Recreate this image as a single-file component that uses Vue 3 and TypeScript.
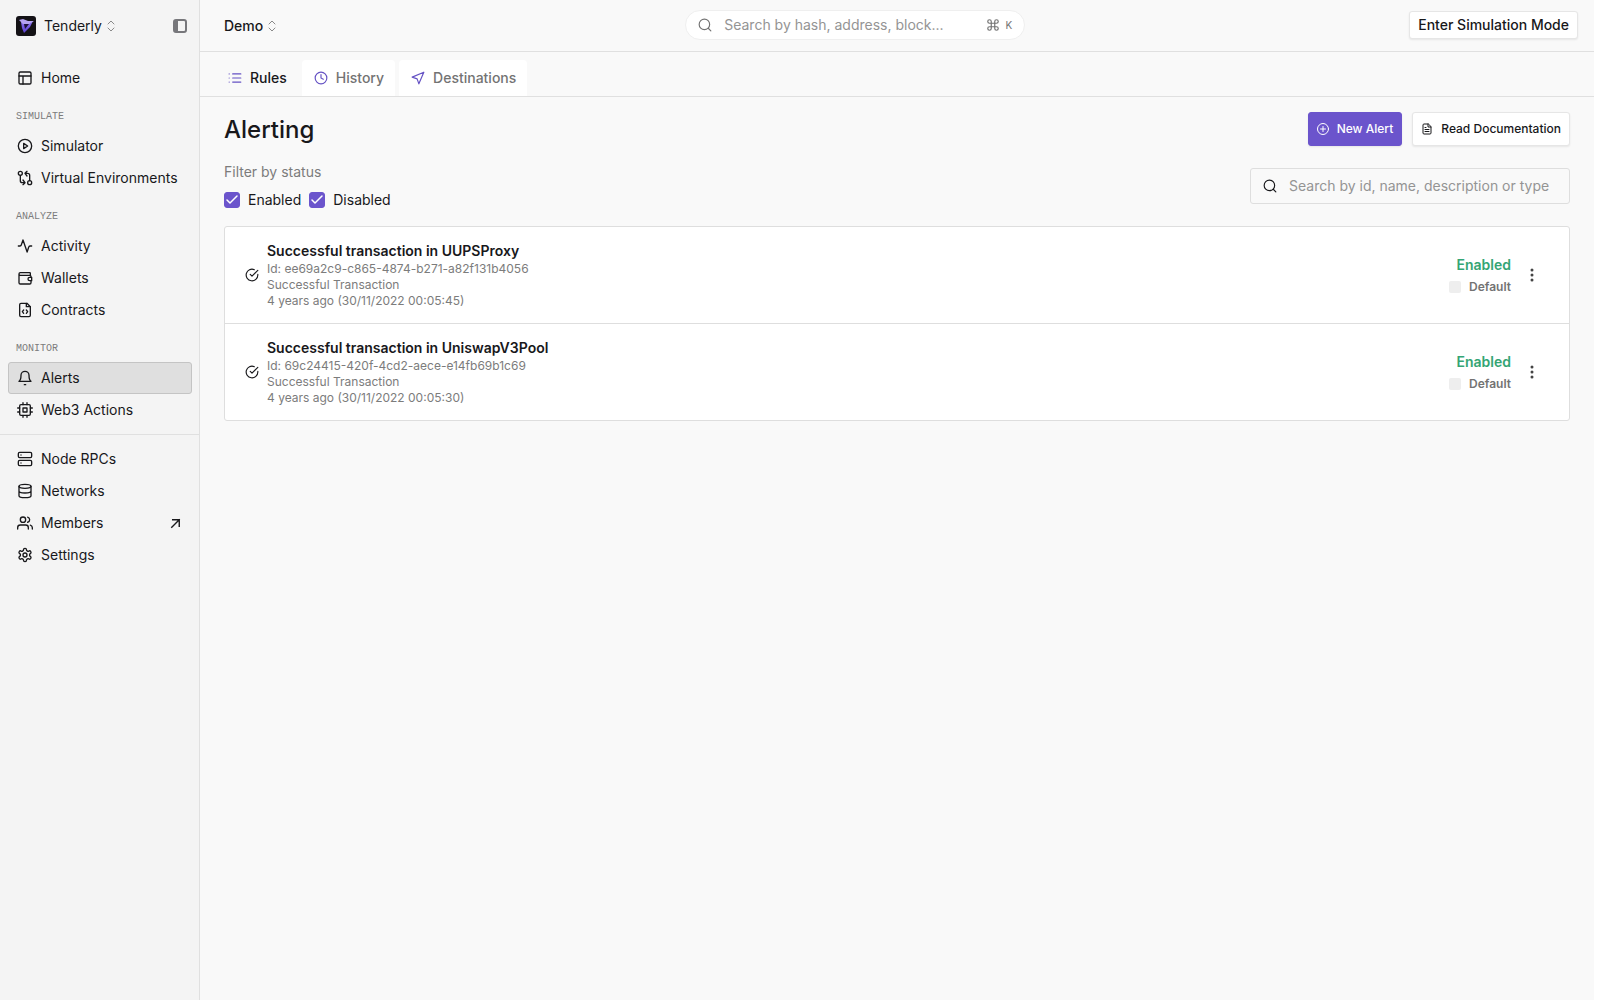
<script setup lang="ts">
import { ref } from 'vue'

interface NavItem {
  label: string
  icon: string
  active?: boolean
  external?: boolean
}
interface NavGroup {
  title?: string
  divided?: boolean
  items: NavItem[]
}
interface Alert {
  title: string
  id: string
  kind: string
  time: string
}

const icons: Record<string, string> = {
  home: '<rect x="3" y="3" width="18" height="18" rx="2"/><path d="M3 9h18M9 21V9"/>',
  play: '<circle cx="12" cy="12" r="10"/><path d="M10 8l6 4-6 4z"/>',
  compare:
    '<circle cx="5" cy="5" r="3"/><circle cx="19" cy="19" r="3"/><path d="M5 8v8a3 3 0 0 0 3 3h3M9 15l3 4-3 3M19 16V8a3 3 0 0 0-3-3h-3M15 9l-3-4 3-3"/>',
  activity: '<path d="M22 12h-2.500a2 2 0 0 0-1.900 1.500L15.200 21 9 3 6.400 10.500A2 2 0 0 1 4.500 12H2"/>',
  wallet:
    '<path d="M20 8V5a1 1 0 0 0-1-1H5a2 2 0 0 0-2 2v13a2 2 0 0 0 2 2h14a2 2 0 0 0 2-2v-3M3 6a2 2 0 0 0 2 2h14a2 2 0 0 1 2 2v1"/><path d="M22 11h-3a2.500 2.500 0 0 0 0 5h3z"/>',
  contract:
    '<path d="M15 2H6a2 2 0 0 0-2 2v16a2 2 0 0 0 2 2h12a2 2 0 0 0 2-2V7z"/><path d="M14 2v5h6M10 12l-2 2.500 2 2.500M14 12l2 2.500-2 2.500"/>',
  bell: '<path d="M18 8A6 6 0 0 0 6 8c0 7-3 9-3 9h18s-3-2-3-9M11 22h2"/>',
  chip: '<rect x="4" y="4" width="16" height="16" rx="2"/><rect x="9" y="9" width="6" height="6"/><path d="M9 1v3M15 1v3M9 20v3M15 20v3M20 9h3M20 15h3M1 9h3M1 15h3"/>',
  server:
    '<rect x="2" y="2" width="20" height="8" rx="2"/><rect x="2" y="14" width="20" height="8" rx="2"/><path d="M6 6h.01M6 18h.01"/>',
  database:
    '<ellipse cx="12" cy="5" rx="9" ry="3"/><path d="M21 12c0 1.700-4 3-9 3s-9-1.300-9-3M3 5v14c0 1.700 4 3 9 3s9-1.300 9-3V5"/>',
  users:
    '<path d="M17 21v-2a4 4 0 0 0-4-4H5a4 4 0 0 0-4 4v2"/><circle cx="9" cy="7" r="4"/><path d="M23 21v-2a4 4 0 0 0-3-3.870M16 3.130a4 4 0 0 1 0 7.750"/>',
  settings:
    '<circle cx="12" cy="12" r="3"/><path d="M12.220 2h-.44a2 2 0 0 0-2 2v.18a2 2 0 0 1-1 1.730l-.43.25a2 2 0 0 1-2 0l-.15-.08a2 2 0 0 0-2.730.73l-.22.38a2 2 0 0 0 .73 2.730l.15.1a2 2 0 0 1 1 1.720v.51a2 2 0 0 1-1 1.740l-.15.09a2 2 0 0 0-.73 2.730l.22.38a2 2 0 0 0 2.730.73l.15-.08a2 2 0 0 1 2 0l.43.25a2 2 0 0 1 1 1.730V20a2 2 0 0 0 2 2h.44a2 2 0 0 0 2-2v-.18a2 2 0 0 1 1-1.730l.43-.25a2 2 0 0 1 2 0l.15.08a2 2 0 0 0 2.730-.73l.22-.39a2 2 0 0 0-.73-2.730l-.15-.08a2 2 0 0 1-1-1.740v-.5a2 2 0 0 1 1-1.740l.15-.09a2 2 0 0 0 .73-2.730l-.22-.38a2 2 0 0 0-2.730-.73l-.15.08a2 2 0 0 1-2 0l-.43-.25a2 2 0 0 1-1-1.730V4a2 2 0 0 0-2-2z"/>',
  list: '<path d="M8 5h14M8 12h14M8 19h14M2 5h.01M2 12h.01M2 19h.01"/>',
  clock: '<circle cx="12" cy="12" r="10"/><path d="M12 6v6l4 2"/>',
  send: '<path d="M22 2L2 10.500l8.500 3L13.500 22z"/>',
}

const groups: NavGroup[] = [
  { items: [{ label: 'Home', icon: 'home' }] },
  {
    title: 'SIMULATE',
    items: [
      { label: 'Simulator', icon: 'play' },
      { label: 'Virtual Environments', icon: 'compare' },
    ],
  },
  {
    title: 'ANALYZE',
    items: [
      { label: 'Activity', icon: 'activity' },
      { label: 'Wallets', icon: 'wallet' },
      { label: 'Contracts', icon: 'contract' },
    ],
  },
  {
    title: 'MONITOR',
    items: [
      { label: 'Alerts', icon: 'bell', active: true },
      { label: 'Web3 Actions', icon: 'chip' },
    ],
  },
  {
    divided: true,
    items: [
      { label: 'Node RPCs', icon: 'server' },
      { label: 'Networks', icon: 'database' },
      { label: 'Members', icon: 'users', external: true },
      { label: 'Settings', icon: 'settings' },
    ],
  },
]

const tabs = [
  { label: 'Rules', icon: 'list', active: true },
  { label: 'History', icon: 'clock', active: false },
  { label: 'Destinations', icon: 'send', active: false },
]

const alerts: Alert[] = [
  {
    title: 'Successful transaction in UUPSProxy',
    id: 'ee69a2c9-c865-4874-b271-a82f131b4056',
    kind: 'Successful Transaction',
    time: '4 years ago (30/11/2022 00:05:45)',
  },
  {
    title: 'Successful transaction in UniswapV3Pool',
    id: '69c24415-420f-4cd2-aece-e14fb69b1c69',
    kind: 'Successful Transaction',
    time: '4 years ago (30/11/2022 00:05:30)',
  },
]

const enabled = ref(true)
const disabled = ref(true)
const globalQuery = ref('')
const query = ref('')
</script>

<template>
  <div class="app">
    <aside class="sidebar">
      <div class="brand">
        <button class="brand-switch" type="button">
          <svg class="logo" viewBox="0 0 20 20" aria-hidden="true">
            <defs>
              <linearGradient id="lg" x1="0" y1="0" x2="0" y2="1">
                <stop offset="0" stop-color="#8d74ee" />
                <stop offset="1" stop-color="#5a3fd0" />
              </linearGradient>
            </defs>
            <rect width="20" height="20" rx="3" fill="#141216" />
            <path d="M5 6l12-1-3 6-6 6-2-5z" fill="url(#lg)" />
            <path d="M8 8l5 0-4 5z" fill="#1d1238" />
            <path d="M3 4l4-1 5 2 6 0-5 3-6 0z" fill="#b4a3f0" />
          </svg>
          <span>Tenderly</span>
          <svg class="chev" viewBox="0 0 10 14"><path d="M2 5l3-3 3 3M2 9l3 3 3-3" /></svg>
        </button>
        <button class="collapse" type="button" aria-label="Collapse sidebar">
          <svg viewBox="0 0 16 16"><rect x="2" y="2" width="12" height="12" rx="2" /><path class="fill" d="M2 2h4v12H2z" /></svg>
        </button>
      </div>
      <nav>
        <div v-for="(g, i) in groups" :key="i" class="group" :class="{ divided: g.divided }">
          <div v-if="g.title" class="group-title">{{ g.title }}</div>
          <a v-for="n in g.items" :key="n.label" href="#" class="nav-item" :class="{ active: n.active }">
            <svg class="icon" viewBox="0 0 24 24" v-html="icons[n.icon]" />
            <span>{{ n.label }}</span>
            <svg v-if="n.external" class="ext" viewBox="0 0 16 16"><path d="M4 12l8-8M5 4h7v7" /></svg>
          </a>
        </div>
      </nav>
    </aside>

    <div class="main">
      <header class="topbar">
        <button class="project" type="button">
          <span>Demo</span>
          <svg class="chev" viewBox="0 0 10 14"><path d="M2 5l3-3 3 3M2 9l3 3 3-3" /></svg>
        </button>
        <label class="global-search">
          <svg class="icon-sm" viewBox="0 0 24 24"><circle cx="11" cy="11" r="9" /><path d="M22 22l-4-4" /></svg>
          <input v-model="globalQuery" type="text" aria-label="Global search" placeholder="Search by hash, address, block..." />
          <svg class="icon-sm cmd" viewBox="0 0 24 24">
            <path d="M18 3a3 3 0 0 0-3 3v12a3 3 0 1 0 3-3H6a3 3 0 1 0 3 3V6a3 3 0 1 0-3 3h12a3 3 0 0 0 0-6z" />
          </svg>
          <kbd>K</kbd>
        </label>
        <button class="sim" type="button">Enter Simulation Mode</button>
      </header>

      <nav class="tabs">
        <a v-for="t in tabs" :key="t.label" href="#" class="tab" :class="{ current: t.active }">
          <svg class="tab-icon" viewBox="0 0 24 24" v-html="icons[t.icon]" />
          <span>{{ t.label }}</span>
        </a>
      </nav>

      <main class="content">
        <div class="title-row">
          <h1>Alerting</h1>
          <div class="actions">
            <button class="btn primary" type="button">
              <svg viewBox="0 0 24 24"><circle cx="12" cy="12" r="11" /><path d="M12 7v10M7 12h10" /></svg>
              New Alert
            </button>
            <a class="btn" href="#">
              <svg viewBox="0 0 24 24">
                <path d="M14 2H6a2 2 0 0 0-2 2v16a2 2 0 0 0 2 2h12a2 2 0 0 0 2-2V8z" />
                <path d="M14 2v6h6M16 13H8M16 17H8M10 9H8" />
              </svg>
              Read Documentation
            </a>
          </div>
        </div>

        <div class="filter-row">
          <div>
            <div class="filter-title">Filter by status</div>
            <div class="checks">
              <label><input v-model="enabled" type="checkbox" />Enabled</label>
              <label><input v-model="disabled" type="checkbox" />Disabled</label>
            </div>
          </div>
          <label class="search">
            <svg class="icon-sm" viewBox="0 0 24 24"><circle cx="11" cy="11" r="9" /><path d="M22 22l-4-4" /></svg>
            <input v-model="query" type="text" aria-label="Search alerts" placeholder="Search by id, name, description or type" />
          </label>
        </div>

        <ul class="list">
          <li v-for="a in alerts" :key="a.id">
            <svg class="ok" viewBox="0 0 24 24">
              <path d="M22 11v1a10 10 0 1 1-6-9.140" />
              <path d="M22 4L12 14l-3-3" />
            </svg>
            <div class="info">
              <h2>{{ a.title }}</h2>
              <p>Id: {{ a.id }}</p>
              <p>{{ a.kind }}</p>
              <p>{{ a.time }}</p>
            </div>
            <div class="status">
              <strong>Enabled</strong>
              <span class="severity"><i />Default</span>
            </div>
            <button class="more" type="button" aria-label="More actions">
              <svg viewBox="0 0 4 16"><circle cx="2" cy="3" r="1.500" /><circle cx="2" cy="8" r="1.500" /><circle cx="2" cy="13" r="1.500" /></svg>
            </button>
          </li>
        </ul>
      </main>
    </div>
  </div>
</template>

<style>
body {
  background: #fff;
}
</style>

<style scoped>
* {
  box-sizing: border-box;
}
.app {
  display: flex;
  min-height: 100vh;
  margin-right: 6px;
  font-family: Inter, 'Liberation Sans', sans-serif;
  font-size: 14px;
  line-height: 20px;
  color: #18181b;
  background: #f9f9f9;
}
button,
input,
kbd {
  font: inherit;
  color: inherit;
}
button {
  display: flex;
  align-items: center;
  padding: 0;
  border: 0;
  background: none;
  cursor: pointer;
}
a {
  color: inherit;
  text-decoration: none;
}
svg {
  flex: none;
  fill: none;
  stroke: currentColor;
  stroke-width: 2;
  stroke-linecap: round;
  stroke-linejoin: round;
}
input[type='text'] {
  flex: 1;
  min-width: 0;
  padding: 0;
  border: 0;
  outline: 0;
  background: none;
}
input::placeholder {
  color: #949494;
  opacity: 1;
}

.sidebar {
  flex: none;
  width: 200px;
  border-right: 1px solid #e0e0e0;
  background: #f4f4f4;
}
.brand {
  display: flex;
  align-items: center;
  justify-content: space-between;
  height: 52px;
  margin-bottom: 10px;
  padding: 0 11px 0 16px;
}
.brand-switch {
  gap: 8px;
}
.logo {
  width: 20px;
  height: 20px;
  stroke: none;
}
.chev {
  width: 10px;
  height: 14px;
  color: #8a8a8a;
  stroke-width: 1;
}
.brand .chev {
  margin-left: -4px;
}
.collapse svg {
  width: 16px;
  height: 16px;
  color: #77777b;
}
.collapse .fill {
  fill: currentColor;
  stroke: none;
}
.group {
  padding: 0 7px 0 8px;
}
.group-title {
  padding: 15px 8px 5px;
  font-family: 'Liberation Mono', monospace;
  font-size: 10px;
  line-height: 16px;
  color: #7c7c7c;
}
.group.divided {
  margin-top: 8px;
  padding-top: 8px;
  border-top: 1px solid #e0e0e0;
}
.nav-item {
  display: flex;
  align-items: center;
  gap: 8px;
  height: 32px;
  padding: 0 8px;
  border: 1px solid transparent;
  border-radius: 3px;
}
.nav-item.active {
  border-color: #c4c4c4;
  background: #dfdfdf;
}
.icon {
  width: 16px;
  height: 16px;
}
.ext {
  width: 15px;
  height: 15px;
  margin-left: auto;
  stroke-width: 1.5;
  stroke-linecap: square;
  stroke-linejoin: miter;
}

.main {
  flex: 1;
  min-width: 0;
}
.topbar {
  display: flex;
  align-items: center;
  justify-content: space-between;
  height: 52px;
  padding: 0 16px 1px 24px;
  border-bottom: 1px solid #e0e0e0;
}
.project {
  gap: 4px;
  padding: 1px 24px 0 0;
  font-weight: 500;
}
.global-search {
  display: flex;
  align-items: center;
  width: 340px;
  height: 30px;
  padding: 0 12px;
  border: 1px solid #efefef;
  border-radius: 16px;
  background: #fff;
  color: #737373;
}
.icon-sm {
  width: 14px;
  height: 14px;
}
.global-search input {
  margin-left: 12px;
}
.cmd {
  margin-right: 6px;
}
kbd {
  font-size: 10px;
}
.sim {
  height: 28px;
  padding: 0 8px;
  border: 1px solid #e6e6e6;
  border-radius: 3px;
  background: #fff;
  font-weight: 500;
  box-shadow: 0 1px 2px rgba(0, 0, 0, 0.08);
}
.tabs {
  display: flex;
  gap: 4px;
  height: 45px;
  padding: 8px 16px 0;
  border-bottom: 1px solid #e0e0e0;
}
.tab {
  display: flex;
  align-items: center;
  gap: 8px;
  padding: 0 11px 0 12px;
  border-radius: 4px 4px 0 0;
  background: #fff;
  color: #737373;
  font-weight: 500;
}
.tab.current {
  background: none;
  color: #18181b;
}
.tab-icon {
  width: 14px;
  height: 14px;
  color: #6552c4;
}

.content {
  padding: 15px 24px;
}
.title-row,
.filter-row,
.actions,
.checks,
.checks label {
  display: flex;
  align-items: center;
}
.title-row,
.filter-row {
  justify-content: space-between;
}
.title-row {
  margin-bottom: 16px;
}
h1 {
  margin: 0;
  font-size: 24px;
  line-height: 32px;
  padding-top: 2px;
  font-weight: 500;
}
.actions {
  gap: 10px;
}
.btn {
  display: flex;
  align-items: center;
  gap: 8px;
  height: 34px;
  padding: 0 8px;
  border: 1px solid #e6e6e6;
  border-radius: 3px;
  background: #fff;
  font-size: 12px;
  font-weight: 500;
  box-shadow: 0 1px 2px rgba(0, 0, 0, 0.08);
}
.btn svg {
  width: 12px;
  height: 12px;
}
.btn.primary {
  border-color: #6b54cc;
  background: #6b54cc;
  color: #fff;
}
.filter-row {
  margin-bottom: 16px;
}
.filter-title {
  margin-bottom: 8px;
  color: #7c7c7c;
}
.checks {
  gap: 8px;
}
.checks label {
  gap: 8px;
}
.checks input {
  appearance: none;
  width: 16px;
  height: 16px;
  margin: 0;
  border: 1px solid #6b54cc;
  border-radius: 3px;
}
.checks input:checked {
  background: #6b54cc
    url("data:image/svg+xml,%3Csvg xmlns='http://www.w3.org/2000/svg' viewBox='0 0 14 14'%3E%3Cpath d='M2 7l3 3 7-7' fill='none' stroke='white' stroke-width='1.5' stroke-linecap='round' stroke-linejoin='round'/%3E%3C/svg%3E")
    center / 14px no-repeat;
}
.search {
  display: flex;
  align-items: center;
  gap: 12px;
  width: 320px;
  height: 36px;
  padding: 0 12px;
  border: 1px solid #dedede;
  border-radius: 3px;
}
.list {
  margin: 0;
  padding: 0;
  border: 1px solid #dedede;
  border-radius: 3px;
  background: #fff;
  list-style: none;
}
.list li {
  display: flex;
  align-items: center;
  padding: 14px 35px 14px 20px;
}
.list li + li {
  border-top: 1px solid #dedede;
}
.ok {
  width: 14px;
  height: 14px;
  margin-right: 8px;
}
.info {
  flex: 1;
}
h2 {
  margin: 0;
  font-size: 14px;
  line-height: 20px;
  font-weight: 600;
}
p {
  margin: 0;
  font-size: 12px;
  line-height: 16px;
  color: #7c7c7c;
}
.status {
  display: flex;
  flex-direction: column;
  align-items: flex-end;
  gap: 2px;
  padding-top: 2px;
}
.status strong {
  font-weight: 600;
  color: #34a574;
}
.severity {
  display: flex;
  align-items: center;
  gap: 8px;
  font-size: 12px;
  font-weight: 600;
  color: #737373;
}
.severity i {
  width: 12px;
  height: 12px;
  border-radius: 2px;
  background: #eeeeee;
}
.more {
  margin-left: 19px;
}
.more svg {
  width: 4px;
  height: 16px;
  fill: #444;
  stroke: none;
}
</style>
